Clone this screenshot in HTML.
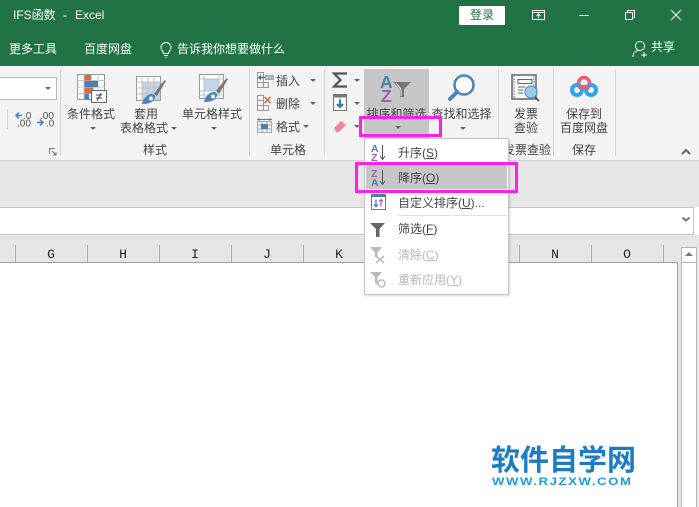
<!DOCTYPE html>
<html><head><meta charset="utf-8">
<style>
html,body{margin:0;padding:0}
body{width:699px;height:507px;position:relative;overflow:hidden;background:#fff;font-family:"Liberation Sans","Noto Sans CJK SC",sans-serif;font-size:12px;color:#444}
div,span,svg{position:absolute}
.t{white-space:nowrap;line-height:16px;height:16px}
.c{text-align:center;white-space:nowrap;line-height:16px;height:16px}
.w{color:#fff}
.h{font-family:"Liberation Mono",monospace;font-size:13px;color:#222;width:72px;text-align:center;top:247px;line-height:15px}
.s{width:1px;top:245px;height:17px;background:#b0b0b0}
.v{width:1px;background:#d2d2d2;top:70px;height:86px}
.a{width:0;height:0;border-left:3.5px solid transparent;border-right:3.5px solid transparent;border-top:3.5px solid #666}
u{text-decoration:underline}
</style></head><body>
<div style="left:0;top:0;width:699px;height:66px;background:#217346"></div>
<div class="t w" style="left:13px;top:7px">IFS函数</div>
<div class="t w" style="left:63px;top:7px">-</div>
<div class="t w" style="left:75px;top:7px">Excel</div>
<div class="t w" style="left:9px;top:41px">更多工具</div>
<div class="t w" style="left:84px;top:41px">百度网盘</div>
<svg style="left:158px;top:41px" width="16" height="18" fill="none" stroke="#fff"><path d="M5.500 12.500c0-2.500-2.500-3-2.500-6a5 5 0 0 1 10 0c0 3-2.500 3.500-2.500 6zM6 14.500h4M7 16.500h2"/></svg>
<div class="t w" style="left:177px;top:41px">告诉我你想要做什么</div>
<div class="c" style="left:459px;top:6px;width:46px;height:19px;line-height:19px;background:#fff;color:#217346;border-radius:1px">登录</div>
<svg style="left:531px;top:8px" width="16" height="14" fill="none" stroke="#fff"><path d="M1.500 2.500h12v9h-12zM1.500 4.500h12M7.500 10V6M5.500 8l2-2 2 2"/></svg>
<div style="left:579px;top:15px;width:10px;height:1px;background:#fff"></div>
<svg style="left:624px;top:9px" width="12" height="12" fill="none" stroke="#fff"><path d="M1.500 3.500h7v7h-7zM3.500 3.500v-2h7v7h-2"/></svg>
<svg style="left:670px;top:9px" width="12" height="12" fill="none" stroke="#fff"><path d="M1 1l10 10M11 1L1 11"/></svg>
<svg style="left:632px;top:40px" width="18" height="18" fill="none" stroke="#fff"><circle cx="8" cy="6" r="4.500"/><path d="M1 17c0-4 2.500-6 5-6.500M12 12v5.500M9 15h6"/></svg>
<div class="t w" style="left:651px;top:39px">共享</div>

<div style="left:0;top:66px;width:699px;height:94px;background:#f3f3f3"></div>
<div style="left:0;top:160px;width:699px;height:1px;background:#d2d2d2"></div>
<div style="left:0;top:161px;width:699px;height:46px;background:#e6e6e6"></div>

<!-- left dropdown -->
<div style="left:-2px;top:77px;width:57px;height:21px;background:#fff;border:1px solid #b8b8b8"></div>
<div class="a" style="left:45px;top:87px"></div>
<div style="left:7px;top:109px;width:1px;height:20px;background:#d2d2d2"></div>
<svg style="left:14px;top:110px" width="40" height="18"><path d="M2 5.500h6M5 2.500l-3 3 3 3" fill="none" stroke="#4a7fb5" stroke-width="1.500"/><path d="M23 12.500h6M26 9.500l3 3-3 3" fill="none" stroke="#4a7fb5" stroke-width="1.500"/><text x="9" y="9" font-size="10" fill="#555">.0</text><text x="3" y="16.500" font-size="10" fill="#555">.00</text><text x="26" y="9" font-size="10" fill="#555">.00</text><text x="32" y="16.500" font-size="10" fill="#555">.0</text></svg>
<svg style="left:49px;top:148px" width="8" height="8" fill="none" stroke="#777"><path d="M.5 6V.5H6M3 3l4 4M7 4v3H4"/></svg>

<div class="v" style="left:60px"></div>
<div class="v" style="left:249px"></div>
<div class="v" style="left:324px"></div>
<div class="v" style="left:498px"></div>
<div class="v" style="left:553px"></div>
<div class="v" style="left:615px"></div>

<!-- conditional format icon -->
<svg style="left:77px;top:74px" width="30" height="30">
<path d="M.5.500h27v25H.5z" fill="#fff" stroke="#999"/>
<path d="M7 .5v25M14 .5v25M21 .5v25M.5 6.500h27M.5 13h27M.5 19.500h27" stroke="#c4c4c4" fill="none"/>
<rect x="7.500" y="1" width="6.500" height="5.500" fill="#d9694a"/><rect x="7.500" y="7" width="13.500" height="6" fill="#4a7fb5"/><rect x="7.500" y="13.500" width="9" height="6" fill="#d9694a"/><rect x="7.500" y="20" width="4.500" height="5.500" fill="#4a7fb5"/>
<rect x="14.500" y="16.500" width="15" height="12" fill="#fff" stroke="#666"/><path d="M19 21h6M19 24h6M24 19l-4 8" stroke="#444" fill="none"/>
</svg>
<div class="c" style="left:61px;top:106px;width:60px">条件格式</div>
<div class="a" style="left:90px;top:127px"></div>
<!-- table format icon -->
<svg style="left:136px;top:76px" width="30" height="29">
<path d="M.5.500h24v24H.5z" fill="#fff" stroke="#999"/><rect x="6" y="6" width="18" height="18" fill="#c5d5e6"/>
<path d="M6 .5v24M12 .5v24M18 .5v24M.5 6h24M.5 12h24M.5 18h24" stroke="#c0c0c0" fill="none"/>
<path d="M18 18l7-10 4-4 1 1-3 5-6 10z" fill="#777"/><path d="M6 28c1-6 6-10 10-10 2 0 4 2 3 4-2 5-7 6-13 6z" fill="#4a84be"/><circle cx="15" cy="22.500" r="2" fill="#fff"/>
</svg>
<div class="c" style="left:123px;top:106px;width:46px">套用</div>
<div class="t" style="left:120px;top:120px">表格格式</div>
<div class="a" style="left:171px;top:127px"></div>
<!-- cell style icon -->
<svg style="left:199px;top:74px" width="30" height="29">
<path d="M.5.500h24v24H.5z" fill="#fff" stroke="#999"/><rect x="5" y="5" width="15" height="12" fill="#c3d5e8"/>
<path d="M5 .5v24M20 .5v24M.5 5h24M.5 17h24M.5 21h24" stroke="#c0c0c0" fill="none"/>
<path d="M17 17l7-9 4-4 1 1-3 5-6 10z" fill="#777"/><path d="M5 28c1-6 6-10 10-10 2 0 4 2 3 4-2 5-7 6-13 6z" fill="#4a84be"/><circle cx="14" cy="22.500" r="2" fill="#fff"/>
</svg>
<div class="c" style="left:180px;top:106px;width:64px">单元格样式</div>
<div class="a" style="left:211px;top:127px"></div>
<div class="c" style="left:125px;top:142px;width:60px">样式</div>

<!-- cells -->
<svg style="left:256px;top:71px" width="20" height="64" fill="none" stroke="#999">
<path d="M1.500 1.500h6v5h-6zM1.500 6.500h6v5h-6zM7.500 6.500h0M1.500 11.500h6v5h-6zM7.500 11.500h5v5h-5z"/>
<rect x="9.500" y="4.500" width="8" height="4" fill="#bbb" stroke="#aaa"/><path d="M3 6.500h6M5 4.500L3 6.500l2 2" stroke="#3f7ab5" stroke-width="1.500"/>
<path d="M1.500 24.500h6v5h-6zM1.500 29.500h6v5h-6zM1.500 34.500h6v5h-6zM7.500 34.500h5v5h-5z"/><path d="M8.500 26l6 6M14.500 26l-6 6" stroke="#d9694a" stroke-width="1.600"/>
<path d="M1.500 50.500h14v11h-14zM1.500 54h14M1.500 58h14M6 50.500v11M11 50.500v11" stroke="#aaa"/><rect x="5" y="53" width="7" height="5" fill="#4a7fb5" stroke="none"/><path d="M1 48.500h15M3 47v3M14 47v3" stroke="#4a7fb5"/>
</svg>
<div class="t" style="left:276px;top:73px">插入</div>
<div class="a" style="left:310px;top:79px"></div>
<div class="t" style="left:276px;top:96px">删除</div>
<div class="a" style="left:310px;top:102px"></div>
<div class="t" style="left:276px;top:119px">格式</div>
<div class="a" style="left:303px;top:125px"></div>
<div class="c" style="left:258px;top:142px;width:60px">单元格</div>

<!-- editing -->
<svg style="left:331px;top:71px" width="18" height="18"><path d="M16 2.500H3l6.500 6.500L3 15.500h13" fill="none" stroke="#555" stroke-width="2.200"/></svg>
<div class="a" style="left:354px;top:79px"></div>
<svg style="left:333px;top:94px" width="15" height="17"><rect x=".5" y=".5" width="13" height="16" fill="#fff" stroke="#777"/><rect x=".5" y=".5" width="13" height="3" fill="#777"/><path d="M7 5.500v7.500M4 10l3 3 3-3" fill="none" stroke="#2f75b5" stroke-width="2"/></svg>
<div class="a" style="left:354px;top:102px"></div>
<svg style="left:333px;top:119px" width="15" height="15"><path d="M1 9l7-7 5 4-7 7H3z" fill="#ea8a98"/></svg>
<div class="a" style="left:354px;top:125px"></div>

<!-- sort filter button -->
<div style="left:364px;top:69px;width:65px;height:69px;background:#c6c6c6"></div>
<svg style="left:380px;top:73px" width="34" height="30">
<text x="0" y="15" font-size="17.500" font-weight="bold" fill="#4a7fb5" font-family="Liberation Sans">A</text>
<text x="1" y="29" font-size="17.500" font-weight="bold" fill="#9b5fb5" font-family="Liberation Sans">Z</text>
<path d="M13 9h18l-7 7v8l-4 0v-8z" fill="#757575"/><path d="M16 10l5 6v7" fill="none" stroke="#eee"/>
</svg>
<div class="c" style="left:364px;top:106px;width:65px">排序和筛选</div>
<div class="a" style="left:395px;top:126px"></div>

<svg style="left:446px;top:73px" width="30" height="30" fill="none"><circle cx="18" cy="12" r="9.500" stroke="#4a84be" stroke-width="2.500" fill="#fff"/><path d="M11 19l-7 7" stroke="#4a84be" stroke-width="4" stroke-linecap="round"/></svg>
<div class="c" style="left:429px;top:106px;width:65px">查找和选择</div>
<div class="a" style="left:460px;top:127px"></div>

<svg style="left:510px;top:74px" width="34" height="30" fill="none"><path d="M2 1h24v24H2z" fill="#f8f8f8" stroke="#666" stroke-width="1.500"/><path d="M4 1v24M24 1v24" stroke="#888" stroke-dasharray="2 1"/><rect x="8" y="5.500" width="14" height="4" stroke="#666"/><path d="M8 13h7M8 16h5M8 19h5" stroke="#666"/><circle cx="21" cy="18" r="6" fill="#9cc8ea" stroke="#4a84be"/><path d="M25 23l4 4" stroke="#444" stroke-width="1.500"/></svg>
<div class="c" style="left:503px;top:106px;width:46px">发票</div>
<div class="c" style="left:503px;top:120px;width:46px">查验</div>
<div class="t" style="left:503px;top:142px">发票查验</div>

<svg style="left:570px;top:75px" width="30" height="24" fill="none"><circle cx="14" cy="8" r="5.500" stroke="#ef5a6e" stroke-width="3.500"/><circle cx="7" cy="15" r="5" stroke="#2fa5e8" stroke-width="4"/><circle cx="21" cy="15" r="5" stroke="#2fa5e8" stroke-width="4"/><path d="M9 14c3-3 7-3 10 0" stroke="#ef5a6e" stroke-width="3.500"/></svg>
<div class="c" style="left:554px;top:106px;width:60px">保存到</div>
<div class="c" style="left:554px;top:120px;width:60px">百度网盘</div>
<div class="c" style="left:554px;top:142px;width:60px">保存</div>
<svg style="left:680px;top:148px" width="12" height="8" fill="none" stroke="#666" stroke-width="2"><path d="M2 6l4-4 4 4"/></svg>

<!-- formula bar -->
<div style="left:-2px;top:207px;width:694px;height:26px;background:#fff;border:1px solid #c6c6c6"></div>
<svg style="left:681px;top:216px" width="10" height="7" fill="none" stroke="#777" stroke-width="2"><path d="M1.500 1.500l3.500 3 3.500-3"/></svg>

<!-- header -->
<div style="left:0;top:235px;width:699px;height:272px;background:#e6e6e6"></div>
<div style="left:0;top:263px;width:677px;height:244px;background:#fff"></div>
<div style="left:0;top:262px;width:678px;height:1px;background:#a0a0a0"></div>
<div style="left:677px;top:262px;width:1px;height:245px;background:#a0a0a0"></div>
<div class="s" style="left:15px"></div><div class="s" style="left:87px"></div><div class="s" style="left:159px"></div><div class="s" style="left:231px"></div><div class="s" style="left:303px"></div><div class="s" style="left:519px"></div><div class="s" style="left:591px"></div><div class="s" style="left:663px"></div>
<div class="h" style="left:15px">G</div><div class="h" style="left:87px">H</div><div class="h" style="left:159px">I</div><div class="h" style="left:231px">J</div><div class="h" style="left:303px">K</div><div class="h" style="left:519px">N</div><div class="h" style="left:591px">O</div>

<!-- scrollbar -->
<div style="left:681px;top:247px;width:14px;height:260px;background:#fff;border-left:1px solid #b5b5b5;border-right:1px solid #b5b5b5"></div>
<div style="left:681px;top:247px;width:14px;height:14px;background:#fff;border:1px solid #b5b5b5"></div>
<div style="left:681px;top:262px;width:16px;height:1px;background:#b5b5b5"></div>
<div style="left:685px;top:252px;width:0;height:0;border-left:4px solid transparent;border-right:4px solid transparent;border-bottom:4px solid #777"></div>

<!-- menu -->
<div style="left:364px;top:138px;width:143px;height:155px;background:#fff;border:1px solid #c6c6c6;box-shadow:1px 1px 2px rgba(0,0,0,.15)"></div>
<div style="left:366px;top:165px;width:141px;height:24px;background:#c6c6c6"></div>
<svg style="left:370px;top:142px" width="18" height="20"><text x="1" y="10" font-size="10.500" font-weight="bold" fill="#4a7fb5" font-family="Liberation Sans">A</text><text x="1" y="19" font-size="10.500" font-weight="bold" fill="#9b5fb5" font-family="Liberation Sans">Z</text><path d="M12.500 3v14M10 14l2.500 3.500 2.500-3.500" fill="none" stroke="#555"/></svg>
<svg style="left:370px;top:167px" width="18" height="20"><text x="1" y="10" font-size="10.500" font-weight="bold" fill="#9b5fb5" font-family="Liberation Sans">Z</text><text x="1" y="19" font-size="10.500" font-weight="bold" fill="#4a7fb5" font-family="Liberation Sans">A</text><path d="M12.500 3v14M10 14l2.500 3.500 2.500-3.500" fill="none" stroke="#555"/></svg>
<svg style="left:371px;top:194px" width="16" height="16" fill="none"><rect x=".5" y=".5" width="14" height="15" fill="#fff" stroke="#777"/><rect x=".5" y=".5" width="14" height="2.500" fill="#4a7fb5"/><path d="M5 5.500v7M3 10.500l2 2 2-2" stroke="#2f75b5" stroke-width="1.200"/><path d="M10 12.500v-7M8 7.500l2-2 2 2" stroke="#9b5fb5" stroke-width="1.200"/></svg>
<svg style="left:370px;top:223px" width="16" height="14"><path d="M0 0h15L9.500 6v8H6V6z" fill="#666"/></svg>
<svg style="left:370px;top:247px" width="17" height="17" fill="none"><path d="M0 0h12L7.500 5.500v6L5 10V5.500z" fill="#bbb"/><path d="M6 9l8 7M14 9l-8 7" stroke="#bbb" stroke-width="1.500"/></svg>
<svg style="left:370px;top:272px" width="17" height="17" fill="none"><path d="M0 0h12L7.500 5.500v7L5 11V5.500z" fill="#bbb"/><circle cx="11.500" cy="11.500" r="3.500" stroke="#bbb" stroke-width="1.500"/></svg>
<div class="t" style="left:398px;top:145px">升序(<u>S</u>)</div>
<div class="t" style="left:398px;top:170px">降序(<u>O</u>)</div>
<div class="t" style="left:398px;top:195px">自定义排序(<u>U</u>)...</div>
<div style="left:398px;top:215px;width:109px;height:1px;background:#e0e0e0"></div>
<div class="t" style="left:398px;top:221px">筛选(<u>F</u>)</div>
<div class="t" style="left:398px;top:247px;color:#b8b8b8">清除(<u>C</u>)</div>
<div class="t" style="left:398px;top:272px;color:#b8b8b8">重新应用(<u>Y</u>)</div>

<!-- magenta -->
<div style="left:359px;top:116px;width:77px;height:15px;border:3px solid #ff1fe8"></div>
<div style="left:355px;top:162px;width:157px;height:25px;border:3px solid #ff1fe8"></div>

<!-- watermark -->
<div class="t" style="left:491px;top:443px;font-size:29px;line-height:36px;height:36px;font-weight:bold;color:#1a7cc4">软件自学网</div>
<div class="t" style="left:492px;top:477px;font-size:11px;font-weight:bold;color:#1e9be0;letter-spacing:1.3px;line-height:11px;height:11px;transform:scaleX(1.2);transform-origin:left top">WWW.RJZXW.COM</div>
</body></html>
